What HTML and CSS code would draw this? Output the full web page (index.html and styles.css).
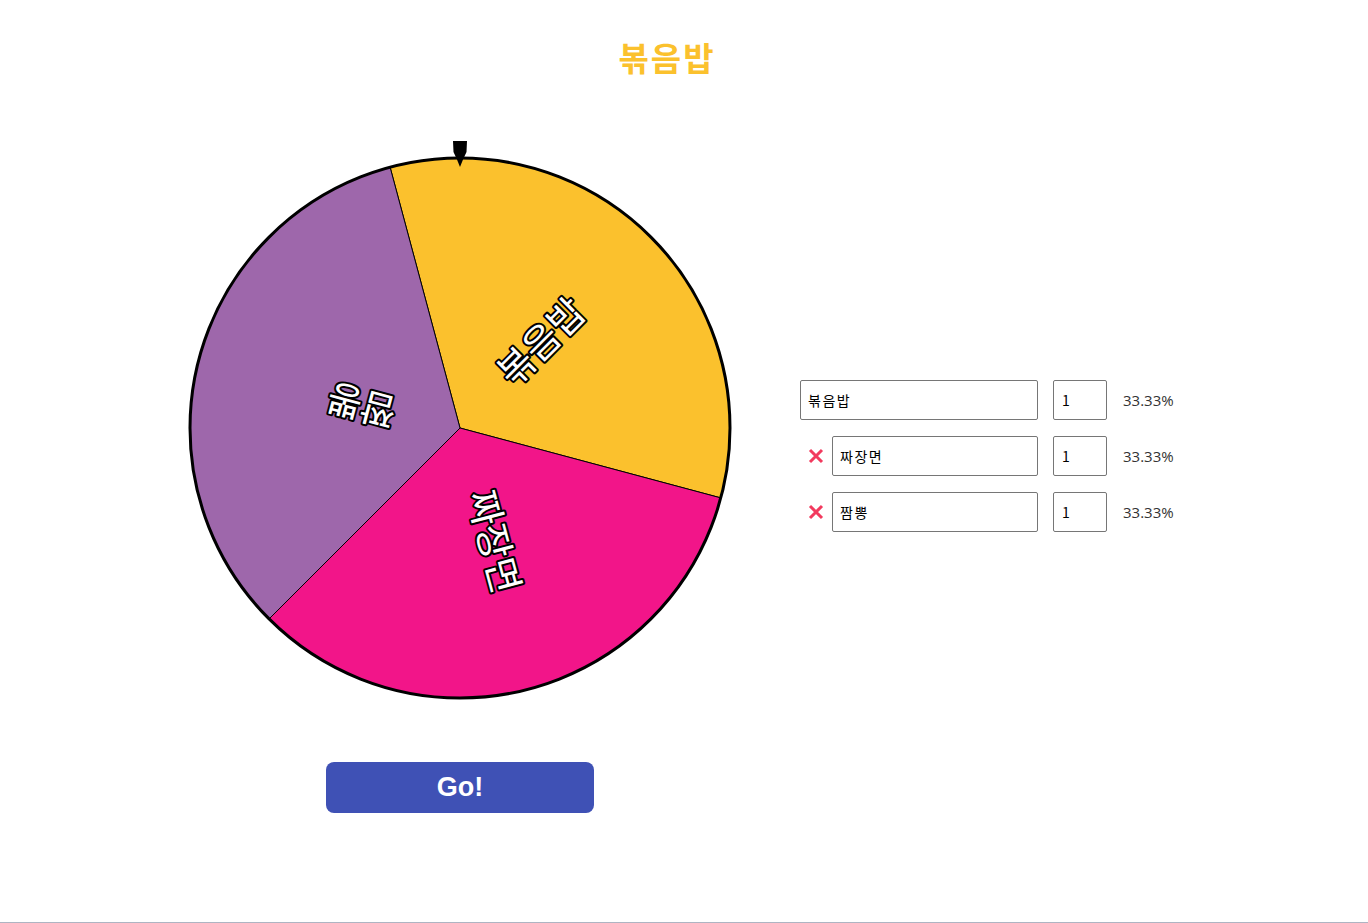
FILE: index.html
```html
<!DOCTYPE html>
<html lang="ko">
<head>
<meta charset="utf-8">
<title>Roulette</title>
<link rel="stylesheet" href="styles.css">
</head>
<body>
<div class="page">
  <h1 class="title">볶음밥</h1>
  <div class="main">
    <div class="wheel-col">
      <svg class="wheel" width="560" height="560" viewBox="0 0 560 560">
        <path d="M280,288 L210.1,27.2 A270,270 0 0 1 540.8,357.9 Z" fill="#FBC12D" stroke="#000" stroke-width="1"/>
        <path d="M280,288 L540.8,357.9 A270,270 0 0 1 89.1,478.9 Z" fill="#F21589" stroke="#000" stroke-width="1"/>
        <path d="M280,288 L89.1,478.9 A270,270 0 0 1 210.1,27.2 Z" fill="#9E67AB" stroke="#000" stroke-width="1"/>
        <circle cx="280" cy="288" r="270" fill="none" stroke="#000" stroke-width="3"/>
        <g transform="translate(280 288) rotate(-45)"><text class="seg-label" x="66" y="-6">볶음밥</text></g>
        <g transform="translate(280 288) rotate(75)"><text class="seg-label" x="66" y="-6">짜장면</text></g>
        <g transform="translate(280 288) rotate(195)"><text class="seg-label" x="66" y="-6">짬뽕</text></g>
        <path d="M273,1 L287,1 L286.5,12 Q283,19 280,27 Q277,19 273.5,12 Z" fill="#000"/>
      </svg>
      <button class="go" type="button">Go!</button>
    </div>
    <div class="entries">
      <div class="row">
        <div class="name-part">
          <input class="name-input" type="text" value="볶음밥">
        </div>
        <input class="num-input" type="text" value="1">
        <span class="pct">33.33%</span>
      </div>
      <div class="row">
        <div class="name-part">
          <span class="del"><svg width="16" height="16" viewBox="0 0 16 16"><path d="M2,2 L14,14 M14,2 L2,14" stroke="#F23A5E" stroke-width="3" stroke-linecap="butt"/></svg></span>
          <input class="name-input" type="text" value="짜장면">
        </div>
        <input class="num-input" type="text" value="1">
        <span class="pct">33.33%</span>
      </div>
      <div class="row">
        <div class="name-part">
          <span class="del"><svg width="16" height="16" viewBox="0 0 16 16"><path d="M2,2 L14,14 M14,2 L2,14" stroke="#F23A5E" stroke-width="3" stroke-linecap="butt"/></svg></span>
          <input class="name-input" type="text" value="짬뽕">
        </div>
        <input class="num-input" type="text" value="1">
        <span class="pct">33.33%</span>
      </div>
    </div>
  </div>
</div>
</body>
</html>
```

FILE: styles.css
```css
html, body {
  margin: 0;
  padding: 0;
}
body {
  background: #fff;
  font-family: "Noto Sans", "Noto Sans CJK KR", sans-serif;
  min-height: 923px;
  box-sizing: border-box;
  border-bottom: 1px solid #aeb4c2;
}
.page {
  width: 1368px;
}
.title {
  margin: 0;
  padding-top: 36px;
  padding-right: 34px;
  height: 42px;
  line-height: 42px;
  text-align: center;
  font-family: "Noto Sans CJK KR", sans-serif;
  font-weight: 700;
  font-size: 33px;
  letter-spacing: 2px;
  color: #FBC12D;
}
.main {
  display: flex;
  align-items: flex-start;
  padding-left: 180px;
  margin-top: 62px;
}
.wheel-col {
  width: 560px;
  display: flex;
  flex-direction: column;
  align-items: center;
}
.wheel {
  display: block;
}
.seg-label {
  font-family: "Noto Sans CJK KR", sans-serif;
  font-weight: 400;
  font-size: 38px;
  fill: #fff;
  stroke: #000;
  stroke-width: 4px;
  stroke-linejoin: round;
  paint-order: stroke;
  dominant-baseline: central;
}
.go {
  margin-top: 62px;
  width: 268px;
  height: 51px;
  border: none;
  border-radius: 8px;
  background: #3F51B5;
  color: #fff;
  font-family: "Liberation Sans", Arial, sans-serif;
  font-weight: 700;
  font-size: 27px;
  padding: 0;
  cursor: pointer;
}
.entries {
  margin-left: 60px;
  margin-top: 240px;
  display: flex;
  flex-direction: column;
  gap: 16px;
}
.row {
  display: flex;
  align-items: center;
  height: 40px;
}
.name-part {
  width: 238px;
  display: flex;
  align-items: center;
}
.del {
  width: 32px;
  display: flex;
  justify-content: center;
  align-items: center;
}
.del svg {
  display: block;
}
.name-input, .num-input {
  box-sizing: border-box;
  height: 40px;
  border: 1px solid #767676;
  border-radius: 2px;
  padding: 0 0 0 7px;
  font-family: "Noto Sans CJK KR", sans-serif;
  font-size: 14px;
  letter-spacing: 1.5px;
  color: #000;
  background: #fff;
  outline: none;
}
.name-input {
  flex: 1;
  min-width: 0;
}
.num-input {
  width: 54px;
  margin-left: 15px;
  padding-left: 8px;
}
.pct {
  margin-left: 16px;
  font-family: "Open Sans", sans-serif;
  font-size: 15px;
  color: #333;
}
```
